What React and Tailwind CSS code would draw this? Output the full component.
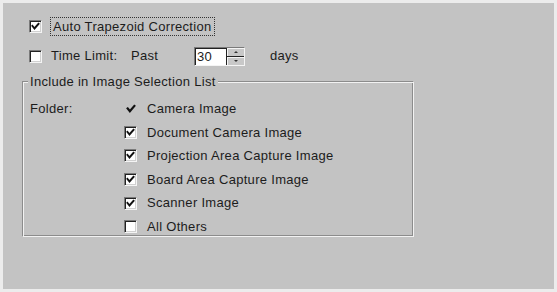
import React from 'react';

const font = { fontFamily: '"Liberation Sans", Arial, sans-serif' };

const Check = ({ size = 9 }) => (
  <svg width={size} height={size} viewBox="0 0 9 9" className="block">
    <path d="M1.5 4 L3.5 6.5 L7.5 1.8" fill="none" stroke="#111" strokeWidth="2" strokeLinecap="square" />
  </svg>
);

const Box = ({ checked }) => (
  <div className="w-[13px] h-[13px] shrink-0 border border-t-[#7a7a7a] border-l-[#7a7a7a] border-r-[#f4f4f4] border-b-[#f4f4f4] bg-white shadow-[inset_1px_1px_0_#222,inset_-1px_-1px_0_#d0d0d0] flex items-center justify-center">
    {checked && <Check />}
  </div>
);

const items = [
  { label: 'Camera Image', mark: 'tick' },
  { label: 'Document Camera Image', mark: 'on' },
  { label: 'Projection Area Capture Image', mark: 'on' },
  { label: 'Board Area Capture Image', mark: 'on' },
  { label: 'Scanner Image', mark: 'on' },
  { label: 'All Others', mark: 'off' },
];

export default function App() {
  return (
    <div
      className="w-[557px] h-[292px] bg-[#c3c3c3] border-[3px] border-[#ececec] text-[13px] tracking-[0.3px] text-[#1c1c1c] overflow-hidden"
      style={font}
    >
      <div className="pl-[26px] pt-[13px]">
        {/* Auto Trapezoid */}
        <div className="flex items-center h-[20px]">
          <Box checked />
          <div className="ml-[8px] px-[2px] h-[19px] flex items-center border border-dotted border-[#333] leading-none">
            Auto Trapezoid Correction
          </div>
        </div>

        {/* Time limit */}
        <div className="flex items-center h-[22px] mt-[9px]">
          <Box />
          <span className="ml-[9px] w-[80px]">Time Limit:</span>
          <span className="w-[63px]">Past</span>
          <div className="flex h-[19px] w-[51px] border border-t-[#7a7a7a] border-l-[#7a7a7a] border-r-[#f4f4f4] border-b-[#f4f4f4] bg-white shadow-[inset_1px_1px_0_#222]">
            <span className="flex-1 pl-[2px] pt-[1px] leading-[16px]">30</span>
            <div className="w-[18px] flex flex-col bg-[#c8c8c8] border-l border-[#222]">
              <div className="flex-1 flex items-center justify-center border-b border-[#222] shadow-[inset_1px_1px_0_#f4f4f4]">
                <div className="w-0 h-0 border-l-[2px] border-r-[2px] border-b-[2px] border-l-transparent border-r-transparent border-b-[#333]" />
              </div>
              <div className="flex-1 flex items-center justify-center shadow-[inset_1px_1px_0_#f4f4f4]">
                <div className="w-0 h-0 border-l-[2px] border-r-[2px] border-t-[2px] border-l-transparent border-r-transparent border-t-[#333]" />
              </div>
            </div>
          </div>
          <span className="ml-[25px]">days</span>
        </div>
      </div>

      {/* Group */}
      <fieldset className="ml-[19px] mt-[7px] w-[392px] h-[163px] border border-[#8c8c8c] border-r-[#f2f2f2] border-b-[#f2f2f2] shadow-[inset_1px_1px_0_#f2f2f2,inset_-1px_-1px_0_#8c8c8c]">
        <legend className="ml-[5px] px-[2px] bg-[#c3c3c3] leading-[15px]">Include in Image Selection List</legend>
        <div className="flex pt-[8px]">
          <div className="w-[101px] pl-[7px] h-[23.6px] flex items-center">Folder:</div>
          <div className="flex flex-col">
            {items.map((it) => (
              <div key={it.label} className="flex items-center h-[23.6px]">
                {it.mark === 'tick' ? (
                  <div className="w-[13px] h-[13px] flex items-center justify-center">
                    <Check size={10} />
                  </div>
                ) : (
                  <Box checked={it.mark === 'on'} />
                )}
                <span className="ml-[10px]">{it.label}</span>
              </div>
            ))}
          </div>
        </div>
      </fieldset>
    </div>
  );
}
